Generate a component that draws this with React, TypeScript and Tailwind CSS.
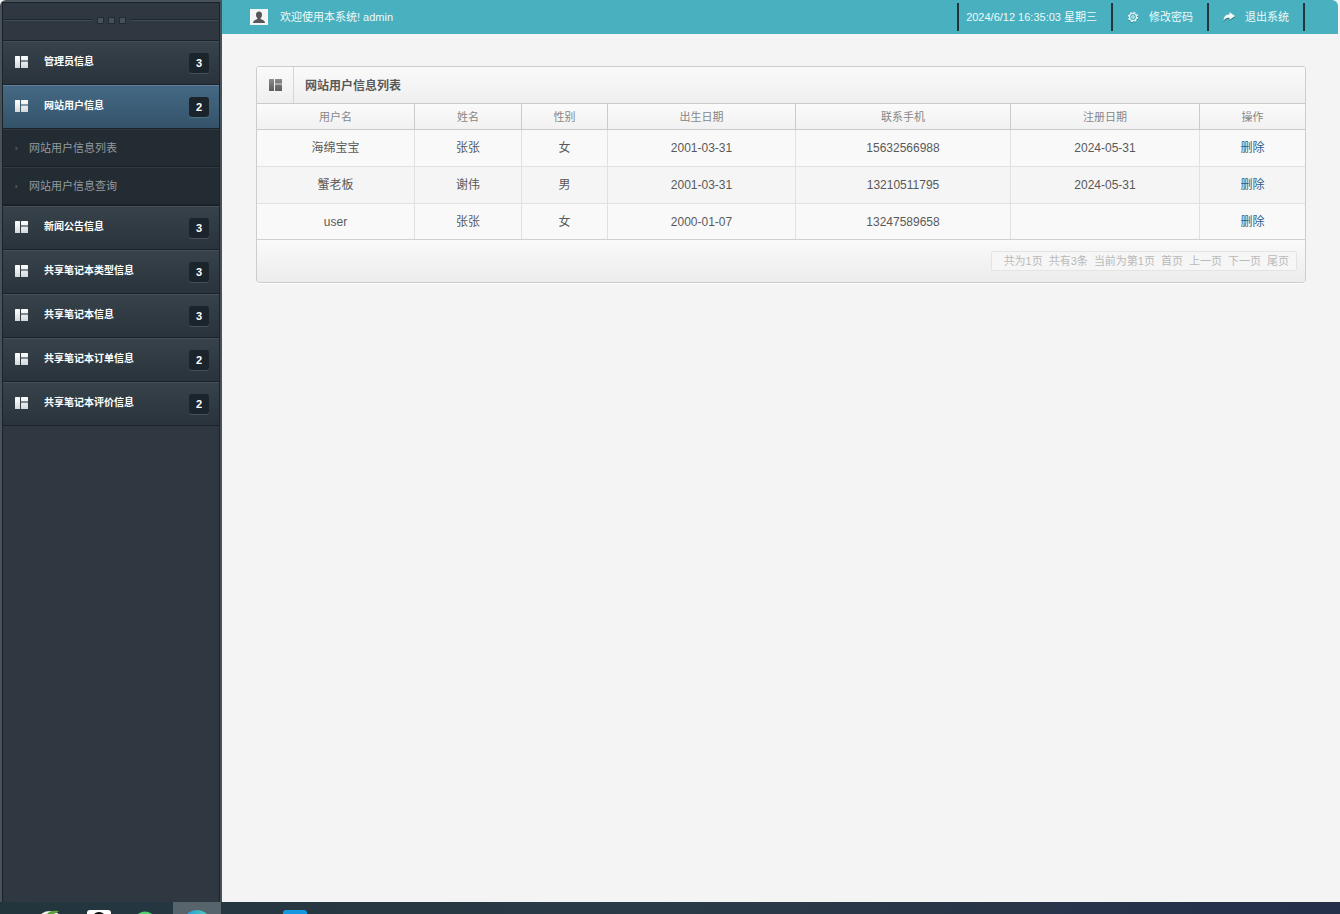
import React from "react";

type MenuEntry = {
  label: string;
  count: number;
  active?: boolean;
  children?: string[];
};

const menu: MenuEntry[] = [
  { label: "管理员信息", count: 3 },
  {
    label: "网站用户信息",
    count: 2,
    active: true,
    children: ["网站用户信息列表", "网站用户信息查询"],
  },
  { label: "新闻公告信息", count: 3 },
  { label: "共享笔记本类型信息", count: 3 },
  { label: "共享笔记本信息", count: 3 },
  { label: "共享笔记本订单信息", count: 2 },
  { label: "共享笔记本评价信息", count: 2 },
];

const columns = [
  { title: "用户名", width: "w-[158px]" },
  { title: "姓名", width: "w-[107px]" },
  { title: "性别", width: "w-[86px]" },
  { title: "出生日期", width: "w-[188px]" },
  { title: "联系手机", width: "w-[215px]" },
  { title: "注册日期", width: "w-[189px]" },
  { title: "操作", width: "w-[105px]" },
];

const users = [
  ["海绵宝宝", "张张", "女", "2001-03-31", "15632566988", "2024-05-31"],
  ["蟹老板", "谢伟", "男", "2001-03-31", "13210511795", "2024-05-31"],
  ["user", "张张", "女", "2000-01-07", "13247589658", ""],
];

function BlocksIcon({ from, to, id }: { from: string; to: string; id: string }) {
  return (
    <svg width="13" height="12" viewBox="0 0 13 12" className="shrink-0" aria-hidden="true">
      <defs>
        <linearGradient id={id} x1="0" y1="0" x2="0" y2="12" gradientUnits="userSpaceOnUse">
          <stop offset="0" stopColor={from} />
          <stop offset="1" stopColor={to} />
        </linearGradient>
      </defs>
      <g fill={`url(#${id})`}>
        <rect x="0" y="0" width="5" height="12" rx="0.5" />
        <rect x="6" y="0" width="7" height="4" rx="0.5" />
        <rect x="6" y="6" width="7" height="6" rx="0.5" />
      </g>
      <rect x="6" y="4" width="7" height="2" fill={to} opacity="0.5" />
    </svg>
  );
}

function GearIcon() {
  return (
    <svg width="12" height="12" viewBox="0 0 12 12" className="shrink-0" aria-hidden="true">
      <circle
        cx="6"
        cy="6.800"
        r="4.600"
        fill="none"
        stroke="#2f6f79"
        strokeWidth="1.200"
        strokeDasharray="1.8 1.81"
      />
      <circle cx="6" cy="6" r="4.600" fill="none" stroke="#eef7f8" strokeWidth="1.300" strokeDasharray="1.8 1.81" />
      <circle cx="6" cy="6" r="3.500" fill="none" stroke="#eef7f8" strokeWidth="1.200" />
      <circle cx="6" cy="6" r="1.300" fill="none" stroke="#eef7f8" strokeWidth="0.900" />
    </svg>
  );
}

function ShareIcon() {
  const d = "M6.500 0 L12 4 L6.500 8 V5.700 C3.800 5.600 1.800 6.400 0.500 9 C0.600 4.800 3 2.400 6.500 2.300 Z";
  return (
    <svg width="12" height="11" viewBox="0 0 12 11" className="shrink-0" aria-hidden="true">
      <path d={d} fill="#2f6770" transform="translate(0 1)" />
      <path d={d} fill="#f2f9fa" />
    </svg>
  );
}

function UserIcon() {
  return (
    <svg width="18" height="16" viewBox="0 0 18 16" className="shrink-0" aria-hidden="true">
      <rect width="18" height="16" fill="#f4f6f6" />
      <path
        d="M9 2.6c2 0 3 1.3 3 3.1 0 1.5-.5 2.7-1.4 3.4v1c1 .8 4.400 1 4.400 3.900H3c0-2.900 3.400-3.100 4.400-3.900v-1C6.500 8.400 6 7.200 6 5.700 6 3.900 7 2.600 9 2.600Z"
        fill="#555759"
      />
    </svg>
  );
}

function Ornament() {
  return (
    <div className="flex h-[39px] items-center gap-[5px] border-y border-[#1b2228] bg-[#2f3841] px-px pb-[3px]">
      <span className="h-0.5 flex-1 border-t border-[#1f272e] bg-[#414c55]" />
      <span className="flex gap-1">
        {[0, 1, 2].map((i) => (
          <span key={i} className="size-[7px] border border-[#222b32] bg-[#46525a]" />
        ))}
      </span>
      <span className="h-0.5 flex-1 border-t border-[#1f272e] bg-[#414c55]" />
    </div>
  );
}

function Sidebar() {
  return (
    <aside className="w-[222px] shrink-0 rounded-tl-md border-x-2 border-t-2 border-[#47525b] bg-[#2f3841]">
      <div className="h-full border-x border-[#1b2228]">
        <Ornament />
        <nav aria-label="主菜单">
          <ul>
            {menu.map((item, i) => (
              <li key={item.label}>
                <a
                  href="#"
                  className={
                    item.active
                      ? "flex h-11 items-center border-t border-b border-t-[#62809a] border-b-[#1b2228] bg-linear-to-b from-[#456984] to-[#34536a] pr-2.5 pb-0.5 pl-3 text-white"
                      : "flex h-11 items-center border-t border-b border-t-[#434e57] border-b-[#1b2228] bg-linear-to-b from-[#37424a] to-[#2a333b] pr-2.5 pb-0.5 pl-3 text-white"
                  }
                >
                  <BlocksIcon from="#ffffff" to="#d5d8da" id={`menu-icon-${i}`} />
                  <span className="flex-1 pb-px pl-4 text-[10px] leading-4 font-bold">{item.label}</span>
                  <span className="mt-0.5 h-5 w-5 rounded-[3px] bg-[#1b242b] text-center text-[11px] leading-5 font-bold shadow-[0_1px_0_rgba(255,255,255,0.12)]">
                    {item.count}
                  </span>
                </a>
                {item.children && (
                  <ul className="bg-[#232c33]">
                    {item.children.map((child) => (
                      <li key={child}>
                        <a
                          href="#"
                          className="flex h-[38px] items-center gap-[11px] border-t border-b border-t-[#2f3940] border-b-[#1a2127] pl-3 text-[11px] text-[#929a9f]"
                        >
                          <svg width="3" height="5" viewBox="0 0 3 5" aria-hidden="true">
                            <path d="M0.500 1 L2 2.500 L0.500 4" fill="none" stroke="#808a90" strokeWidth="0.800" />
                          </svg>
                          {child}
                        </a>
                      </li>
                    ))}
                    <li className="h-px bg-[#1a2127]" aria-hidden="true" />
                  </ul>
                )}
              </li>
            ))}
          </ul>
        </nav>
      </div>
    </aside>
  );
}

function TopBar() {
  return (
    <header className="mr-0.5 flex h-[34px] items-center justify-between rounded-tr-md bg-[#48b0bf] pr-[33px] pl-7 text-[11px] text-[#eefafb]">
      <div className="flex items-center gap-3">
        <UserIcon />
        <span>欢迎使用本系统! admin</span>
      </div>
      <div className="flex h-7 border-r-2 border-[#22343a] whitespace-nowrap">
        <span className="flex items-center border-l-2 border-[#22343a] pr-3.5 pl-[7px]">
          2024/6/12 16:35:03 星期三
        </span>
        <a href="#" className="flex items-center gap-2.5 border-l-2 border-[#22343a] px-3.5">
          <GearIcon />
          修改密码
        </a>
        <a href="#" className="flex items-center gap-2.5 border-l-2 border-[#22343a] px-3.5">
          <ShareIcon />
          退出系统
        </a>
      </div>
    </header>
  );
}

function UserPanel() {
  return (
    <section className="rounded-[3px] border border-[#cdcdcd] bg-[#f9f9f9] shadow-[0_1px_0_#ffffff]">
      <div className="flex h-9 items-stretch rounded-t-[2px] bg-linear-to-b from-[#fafafa] to-[#efefef]">
        <div className="flex w-[37px] items-center justify-center border-r border-[#d5d5d5]">
          <BlocksIcon from="#8b8b8b" to="#5d5d5d" id="panel-icon" />
        </div>
        <h1 className="flex items-center pt-px pl-[11px] text-xs font-bold text-[#595959]">网站用户信息列表</h1>
      </div>
      <table className="w-full table-fixed border-separate border-spacing-0 text-center text-xs text-[#595959]">
        <thead>
          <tr className="h-[27px] bg-linear-to-b from-[#fbfbfb] to-[#f1f1f1] text-[11px] text-[#878787]">
            {columns.map((c) => (
              <th
                key={c.title}
                scope="col"
                className={`${c.width} border-y border-r border-[#cbcbcb] p-0 pt-px font-normal last:border-r-0`}
              >
                {c.title}
              </th>
            ))}
          </tr>
        </thead>
        <tbody>
          {users.map((row) => (
            <tr key={row[0]} className="group h-[37px] odd:bg-[#f9f9f9] even:bg-[#f5f5f5] last:h-[35px]">
              {row.map((cell, i) => (
                <td key={i} className="border-r border-b border-[#e1e1e1] p-0 group-last:border-b-0">
                  {cell}
                </td>
              ))}
              <td className="border-b border-[#e1e1e1] p-0 group-last:border-b-0">
                <a href="#" className="text-[#2b5f8c]">
                  删除
                </a>
              </td>
            </tr>
          ))}
        </tbody>
      </table>
      <div className="flex h-[43px] items-center justify-end rounded-b-[2px] border-t border-[#d0d0d0] bg-linear-to-b from-[#fafafa] to-[#ececec] pr-2">
        <nav
          aria-label="分页"
          className="flex h-5 items-center gap-1.5 rounded-[2px] border border-[#e4e4e4] bg-[#f6f6f6] pr-[7px] pl-3 text-[11px] whitespace-nowrap text-[#bababa]"
        >
          <span>共为1页</span>
          <span>共有3条</span>
          <span>当前为第1页</span>
          <a href="#">首页</a>
          <a href="#">上一页</a>
          <a href="#">下一页</a>
          <a href="#">尾页</a>
        </nav>
      </div>
    </section>
  );
}

function Taskbar() {
  return (
    <footer className="h-3 shrink-0 overflow-hidden bg-linear-to-r from-[#22353d] via-[#2b3a47] to-[#242f4a]">
      <svg width="340" height="12" viewBox="0 0 340 12" aria-hidden="true">
        <defs>
          <linearGradient id="edge" x1="0" y1="0" x2="1" y2="0">
            <stop offset="0" stopColor="#2795dc" />
            <stop offset="1" stopColor="#4fd3b8" />
          </linearGradient>
        </defs>
        <rect x="173" y="0" width="48" height="12" fill="#57646b" />
        <ellipse cx="50" cy="17" rx="11" ry="8" fill="#f1f5ec" />
        <path d="M47 12 C49 9 53 8 59 9 C57 11 53 12 51 13 Z" fill="#5b9f3a" />
        <rect x="87" y="8" width="24" height="12" rx="3" fill="#ffffff" />
        <ellipse cx="99" cy="13" rx="5" ry="3" fill="#111111" />
        <ellipse cx="145" cy="16" rx="9" ry="6.500" fill="#4fcf70" />
        <ellipse cx="197" cy="17" rx="12" ry="9" fill="url(#edge)" />
        <rect x="283" y="8" width="24" height="12" rx="3" fill="#1598e0" />
      </svg>
    </footer>
  );
}

export default function App() {
  return (
    <div className="flex min-h-screen flex-col bg-[#f4f4f4] font-['Liberation_Sans','Noto_Sans_CJK_SC',sans-serif]">
      <div className="flex flex-1">
        <Sidebar />
        <div className="min-w-0 flex-1">
          <TopBar />
          <main className="px-[34px] py-8">
            <UserPanel />
          </main>
        </div>
      </div>
      <Taskbar />
    </div>
  );
}
